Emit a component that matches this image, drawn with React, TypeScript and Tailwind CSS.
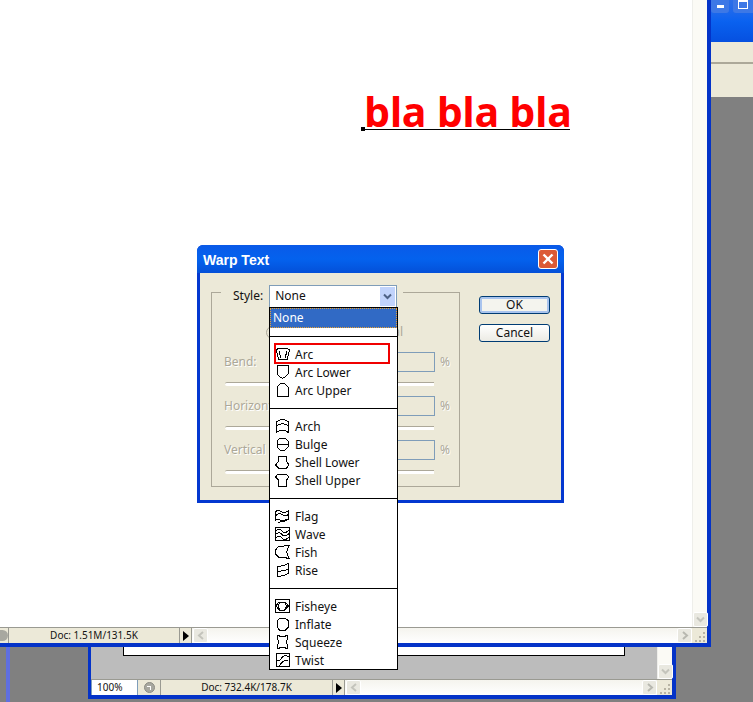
const menuGroups = [
  ['Arc', 'Arc Lower', 'Arc Upper'],
  ['Arch', 'Bulge', 'Shell Lower', 'Shell Upper'],
  ['Flag', 'Wave', 'Fish', 'Rise'],
  ['Fisheye', 'Inflate', 'Squeeze', 'Twist'],
]

const iconPaths: Record<string, string> = {
  Arc: 'M2 4 L5 2 H12 L15.5 4 L13 14 Q9 12 5 14 Z M5 5 L7 12 M13 5 L11 12',
  'Arc Lower': 'M3 1.5 H14 V10 L11 13 L8.5 14.5 L6 13 L3 10 Z',
  'Arc Upper': 'M3 14.5 H14 V5 L11 2 Q8.5 1 6 2 L3 5 Z',
  Arch: 'M2.5 4 Q8.5 -1 14.5 4 V14.5 Q8.5 10 2.5 14.5 Z M2.5 8 Q8.5 3.5 14.5 8',
  Bulge: 'M3 5 L6 2 H11 L14 5 V11 L11 14 H6 L3 11 Z M3 8 H14',
  'Shell Lower': 'M5 2 H12 L13 8 L15 11 L12 14.5 H5 L1.5 11 L4 8 Z',
  'Shell Upper': 'M4 2 Q8 4 12 2 L15 5 L12.5 8 V14.5 H4.5 V8 L1.5 5 Z',
  Flag: 'M1.5 4 Q4 1 7 3.5 T14.5 2.5 V6.5 Q11 9 8 6.5 T1.5 8 Z M1.5 8 V12.5 Q4 10 7 12.5 T14.5 11 V6.5 M4 15 Q8 12 14.5 11',
  Wave: 'M1.5 1.5 H15 V14.5 H1.5 Z M1.5 5 Q5 1.5 8 5 T15 4 M1.5 8.5 Q5 5 8 8.5 T15 7.5 M1.5 12 Q5 8.5 8 12 T15 11',
  Fish: 'M1.5 6 L5 2 H10 L15 1.5 L12.5 8 L15 14.5 L10 13.5 H5 L1.5 10 Z',
  Rise: 'M3 4 Q8 5 14.5 1.5 V11.5 Q8 15 3 14 Z M3 9 Q8 10 14.5 7',
  Fisheye: 'M1.5 1.5 H15 V14 H1.5 Z M2 8 L5 4 H11 L14.5 8 L11 12 H5 Z M6 4 L4 8 L6 12 M10.5 4 L12.5 8 L10.5 12',
  Inflate: 'M3 5 L6 2 H11 L14.5 5 V11 L11 14.5 H6 L3 11 Z',
  Squeeze: 'M4 1.5 Q8.5 3.5 13 1.5 L14 5 Q11 8 14 11 L13 14.5 Q8.5 12.5 4 14.5 L3 11 Q6 8 3 5 Z',
  Twist: 'M2.5 1.5 H15 V14.5 H2.5 Z M2.5 9 Q6 9 7 7 T11 3 L15 5 M5 14.5 Q7 11 9 9.5 T14 9',
}

const ShapeIcon = ({ name }: { name: string }) => (
  <svg width="16" height="16" viewBox="0 0 16 16" fill="none" stroke="#000" strokeWidth="1" shapeRendering="crispEdges" className="shrink-0">
    <path d={iconPaths[name]} />
  </svg>
)

const ArrowLeft = () => (
  <svg width="8" height="9" viewBox="0 0 8 9" fill="none" stroke="#c4c4bc" strokeWidth="2">
    <path d="M6 1 L2 4.5 L6 8" />
  </svg>
)

const ArrowRight = () => (
  <svg width="8" height="9" viewBox="0 0 8 9" fill="none" stroke="#b8b8b0" strokeWidth="2">
    <path d="M2 1 L6 4.5 L2 8" />
  </svg>
)

const ArrowDown = ({ color = '#c4c4bc' }: { color?: string }) => (
  <svg width="9" height="7" viewBox="0 0 9 7" fill="none" stroke={color} strokeWidth="2">
    <path d="M1 1.5 L4.5 5 L8 1.5" />
  </svg>
)

const Grip = () => (
  <div className="w-[15px] h-[15px] bg-[#ece9d8] shrink-0 flex items-end justify-end p-px">
    <svg width="11" height="11" viewBox="0 0 11 11" fill="#b8b4a4">
      <rect x="8" y="1" width="2" height="2" />
      <rect x="4" y="5" width="2" height="2" />
      <rect x="8" y="5" width="2" height="2" />
      <rect x="0" y="9" width="2" height="2" />
      <rect x="4" y="9" width="2" height="2" />
      <rect x="8" y="9" width="2" height="2" />
    </svg>
  </div>
)

const ScrollButton = ({ children }: { children: React.ReactNode }) => (
  <div className="w-[15px] h-[15px] shrink-0 rounded-[2px] border border-white bg-[#e9e8e0] flex items-center justify-center">
    {children}
  </div>
)

const VScroll = () => (
  <div className="w-[15px] shrink-0 bg-[#fbfaf5] border-l border-[#eeeeea] flex flex-col justify-end">
    <ScrollButton>
      <ArrowDown />
    </ScrollButton>
  </div>
)

const StatusBar = ({ doc, docWidth, children }: { doc: string; docWidth: string; children?: React.ReactNode }) => (
  <div className="h-[15px] shrink-0 flex bg-[#ece9d8] border-t border-[#9a9a92] box-content">
    {children}
    <div className={`${docWidth} shrink-0 flex items-center justify-center border-l border-[#9a9a92] text-[10px] text-[#111]`}>
      {doc}
    </div>
    <div className="w-[13px] shrink-0 border-x border-[#9a9a92] flex items-center justify-center">
      <div className="w-0 h-0 border-y-[5px] border-y-transparent border-l-[6px] border-l-black" />
    </div>
    <div className="flex-1 flex bg-gradient-to-b from-[#f5f4ee] to-white pl-px">
      <ScrollButton>
        <ArrowLeft />
      </ScrollButton>
      <div className="flex-1" />
      <ScrollButton>
        <ArrowRight />
      </ScrollButton>
    </div>
    <Grip />
  </div>
)

const ParamRow = ({ label }: { label: string }) => (
  <>
    <div className="h-5 flex items-center text-[#aca899] [text-shadow:1px_1px_0_#fff]">
      <span className="w-[184px] pl-[12px] overflow-hidden whitespace-nowrap">{label}</span>
      <div className="w-[39px] h-5 border border-[#7f9db9] mr-[5px]" />
      <span>%</span>
    </div>
    <div className="h-6 flex items-center pl-[13px] pr-[25px]">
      <div className="flex-1 h-1 bg-white border-t border-[#aca899] rounded-l-full" />
    </div>
  </>
)

const Dialog = () => (
  <div className="absolute left-[197px] top-[245px] w-[367px] h-[258px] rounded-t-[6px] overflow-hidden bg-[#0438d0] flex flex-col">
    <div className="h-[28px] shrink-0 flex items-center justify-between pl-[6px] pr-[6px] pt-[3px] bg-gradient-to-b from-[#0a5ae8] via-[#0462ee] to-[#0450d8]">
      <span className="font-['Liberation_Sans',sans-serif] font-bold text-[14px] text-white">Warp Text</span>
      <div className="w-5 h-5 -mt-[3px] rounded-[3px] border border-white bg-[#dc5a36] flex items-center justify-center">
        <svg width="12" height="12" viewBox="0 0 12 12" stroke="#fff" strokeWidth="2.4">
          <path d="M1.5 1.5 L10.5 10.5 M10.5 1.5 L1.5 10.5" />
        </svg>
      </div>
    </div>
    <div className="flex-1 mx-[3px] mb-[3px] bg-[#ece9d8] flex pl-[11px] pt-[19px] text-[12px]">
      <div className="relative w-[249px] h-[195px] border border-[#aca899] pt-[59px] shrink-0">
        <div className="absolute left-[9px] -top-[9px] w-[182px] h-[24px] bg-[#ece9d8] flex items-center pl-[12px] gap-[6px]">
          <span className="text-[#111]">Style:</span>
          <div className="w-[128px] h-[23px] bg-white border border-[#7f9db9] flex items-center justify-between pl-[5px] pr-px text-[#111]">
            <span>None</span>
            <div className="w-[15px] h-[19px] bg-[#c1d3fb] flex items-center justify-center">
              <ArrowDown color="#4d6185" />
            </div>
          </div>
        </div>
        <div className="absolute left-[54px] top-[30px] w-[137px] h-[18px] flex items-center justify-between text-[#aca899]">
          <div className="w-[13px] h-[13px] rounded-full border border-[#aca899]" />
          <span>Vertical</span>
        </div>
        <ParamRow label="Bend:" />
        <ParamRow label="Horizontal" />
        <ParamRow label="Vertical" />
      </div>
      <div className="ml-[19px] mt-[4px] flex flex-col gap-[10px] text-[#111]">
        <button className="w-[71px] h-[18px] rounded-[3px] border border-[#003c74] bg-[#f4f4ee] shadow-[inset_0_0_0_2px_#a9c4ee] flex items-center justify-center">
          OK
        </button>
        <button className="w-[71px] h-[18px] rounded-[3px] border border-[#003c74] bg-gradient-to-b from-white to-[#ecebe4] flex items-center justify-center">
          Cancel
        </button>
      </div>
    </div>
  </div>
)

const StyleMenu = () => (
  <div className="absolute left-[269px] top-[307px] w-[129px] h-[363px] bg-white border border-black text-[12px] text-[#111]">
    <div className="h-5 bg-[#316ac5] border border-dotted border-[#e8a030] text-white flex items-center pl-[2px]">None</div>
    {menuGroups.map((group) => (
      <div key={group[0]} className="mt-[8px] border-t border-black pt-[8px] pb-px">
        {group.map((name) => (
          <div key={name} className="relative h-[18px] flex items-center pl-[4px] gap-[5px]">
            {name === 'Arc' && (
              <div className="absolute left-[4px] -top-[2px] w-[116px] h-[21px] border-2 border-[#f00000]" />
            )}
            <ShapeIcon name={name} />
            <span className="pt-[2px]">{name}</span>
          </div>
        ))}
      </div>
    ))}
  </div>
)

export default function App() {
  return (
    <div className="relative w-[753px] h-[702px] overflow-hidden bg-[#808080] font-['Noto_Sans',sans-serif]">
      {/* stray strip left of the back window */}
      <div className="absolute left-[6px] top-[640px] w-1 h-[62px] bg-[#5f6fe0]" />

      {/* app window top right */}
      <div className="absolute left-[711px] top-0 w-[42px] h-[97px] flex flex-col">
        <div className="h-[42px] bg-gradient-to-b from-[#2c6fe8] via-[#0a62f0] to-[#0650e0] flex gap-1 items-start">
          <div className="w-[18px] h-[13px] bg-[#3d78e6] rounded-b-[3px] flex items-center justify-center">
            <div className="w-[7px] h-[3px] bg-white" />
          </div>
          <div className="flex-1 h-[13px] bg-[#3d78e6] rounded-bl-[3px] pl-[5px]">
            <div className="w-[10px] h-[9px] border border-t-2 border-white" />
          </div>
        </div>
        <div className="flex-1 bg-[#ece9d8] flex flex-col">
          <div className="h-[20px]" />
          <div className="h-[2px] bg-[#aca899]" />
        </div>
      </div>

      {/* back document window */}
      <div className="absolute left-[88px] top-[400px] w-[588px] h-[299px] border-l-[3px] border-r-4 border-b-4 border-[#0433c8] flex flex-col">
        <div className="flex-1 flex bg-[#bcbcbc]">
          <div className="flex-1 pt-[247px] pl-[32px] pr-[32px]">
            <div className="h-[9px] bg-white border-x border-b border-black" />
          </div>
          <VScroll />
        </div>
        <StatusBar doc="Doc: 732.4K/178.7K" docWidth="w-[172px]">
          <div className="w-[47px] shrink-0 bg-white border-x border-[#7f9db9] flex items-center pl-[5px] text-[10px] text-[#111]">100%</div>
          <div className="w-[22px] shrink-0 flex items-center justify-center">
            <div className="w-[11px] h-[11px] rounded-full bg-[#a8a8a0] border border-[#8c8c84] flex items-center justify-center">
              <div className="w-1 h-1 border-t border-r border-white" />
            </div>
          </div>
        </StatusBar>
      </div>

      {/* front document window */}
      <div className="absolute left-0 top-0 w-[711px] h-[647px] border-r-4 border-b-4 border-[#0433c8] flex flex-col">
        <div className="relative flex-1 flex bg-white">
          <div className="flex-1" />
          <VScroll />
          <div className="absolute left-[361px] top-[84px] w-[209px] h-[46px] border-b border-black">
            <span className="block pl-[3px] pt-[4px] font-['Open_Sans',sans-serif] font-bold text-[41px] leading-[46px] tracking-[-0.3px] text-[#ff0000] whitespace-nowrap">
              bla bla bla
            </span>
            <div className="absolute left-0 -bottom-[2px] w-1 h-1 bg-black" />
          </div>
        </div>
        <StatusBar doc="Doc: 1.51M/131.5K" docWidth="w-[171px]">
          <div className="w-[8px] shrink-0 overflow-hidden flex items-center justify-end">
            <div className="w-[13px] h-[11px] shrink-0 rounded-full bg-[#a8a8a0]" />
          </div>
        </StatusBar>
      </div>

      <Dialog />
      <StyleMenu />
    </div>
  )
}
